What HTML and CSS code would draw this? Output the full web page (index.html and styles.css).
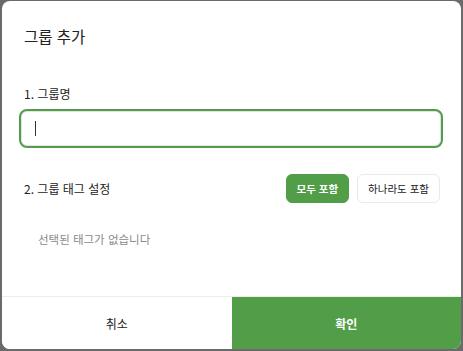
FILE: index.html
```html
<!DOCTYPE html>
<html lang="ko">
<head>
    <meta charset="utf-8">
    <title>그룹 추가</title>
    <link rel="stylesheet" href="styles.css">
</head>
<body>
<div class="dialog">
    <div class="dialog_body">
        <div class="dialog_title">그룹 추가</div>

        <div class="field_label">1. 그룹명</div>
        <div class="name_input"><span class="caret"></span></div>

        <div class="tag_row">
            <div class="field_label">2. 그룹 태그 설정</div>
            <div class="mode_buttons">
                <button class="mode_btn active">모두 포함</button>
                <button class="mode_btn">하나라도 포함</button>
            </div>
        </div>

        <div class="empty_tags">선택된 태그가 없습니다</div>
    </div>

    <div class="dialog_footer">
        <button class="footer_btn cancel">취소</button>
        <button class="footer_btn confirm">확인</button>
    </div>
</div>
</body>
</html>
```

FILE: styles.css
```css
body {
    margin: 0;
    padding: 1px 2px 2px 2px;
    background-color: #6a6a6a;
    font-family: "Noto Sans CJK KR", "Noto Sans", sans-serif;
    color: #222222;
}

.dialog {
    height: 348px;
    background-color: #fff;
    border-radius: 8px;
    overflow: hidden;
    display: flex;
    flex-direction: column;
}

.dialog_body {
    flex: 1;
    padding: 0 18px 0 17px;
}

.dialog_title {
    font-size: 15.5px;
    font-weight: 400;
    padding: 24px 0 0 5px;
    line-height: 22px;
}

.field_label {
    font-size: 12px;
    line-height: 18px;
    padding-left: 5px;
}

.dialog_title + .field_label {
    margin-top: 38px;
}

.name_input {
    margin-top: 6px;
    height: 35px;
    border: 2px solid #519d48;
    border-radius: 8px;
    box-shadow: inset 0 0 0 1px #e4e4e4;
    display: flex;
    align-items: center;
    padding-left: 14px;
}

.caret {
    width: 1px;
    height: 15px;
    background-color: #333;
}

.tag_row {
    margin-top: 26px;
    display: flex;
    align-items: center;
    justify-content: space-between;
}

.mode_buttons {
    display: flex;
    gap: 8px;
    padding-right: 3px;
}

.mode_btn {
    font-family: inherit;
    font-size: 10.5px;
    height: 29px;
    padding: 0 10px;
    border-radius: 6px;
    border: 1px solid #e2eedf;
    background-color: #fff;
    color: #222;
}

.mode_btn.active {
    background-color: #519d48;
    border-color: #519d48;
    color: #fff;
    font-weight: bold;
}

.empty_tags {
    margin-top: 28px;
    padding-left: 19px;
    font-size: 11.5px;
    color: #8a8a8a;
}

.dialog_footer {
    height: 52px;
    display: flex;
    border-top: 1px solid #e8efe6;
}

.footer_btn {
    flex: 1;
    border: 0;
    font-family: inherit;
    font-size: 12px;
    background-color: #fff;
    color: #222;
}

.footer_btn.confirm {
    background-color: #519d48;
    color: #fff;
    font-weight: bold;
}
```
